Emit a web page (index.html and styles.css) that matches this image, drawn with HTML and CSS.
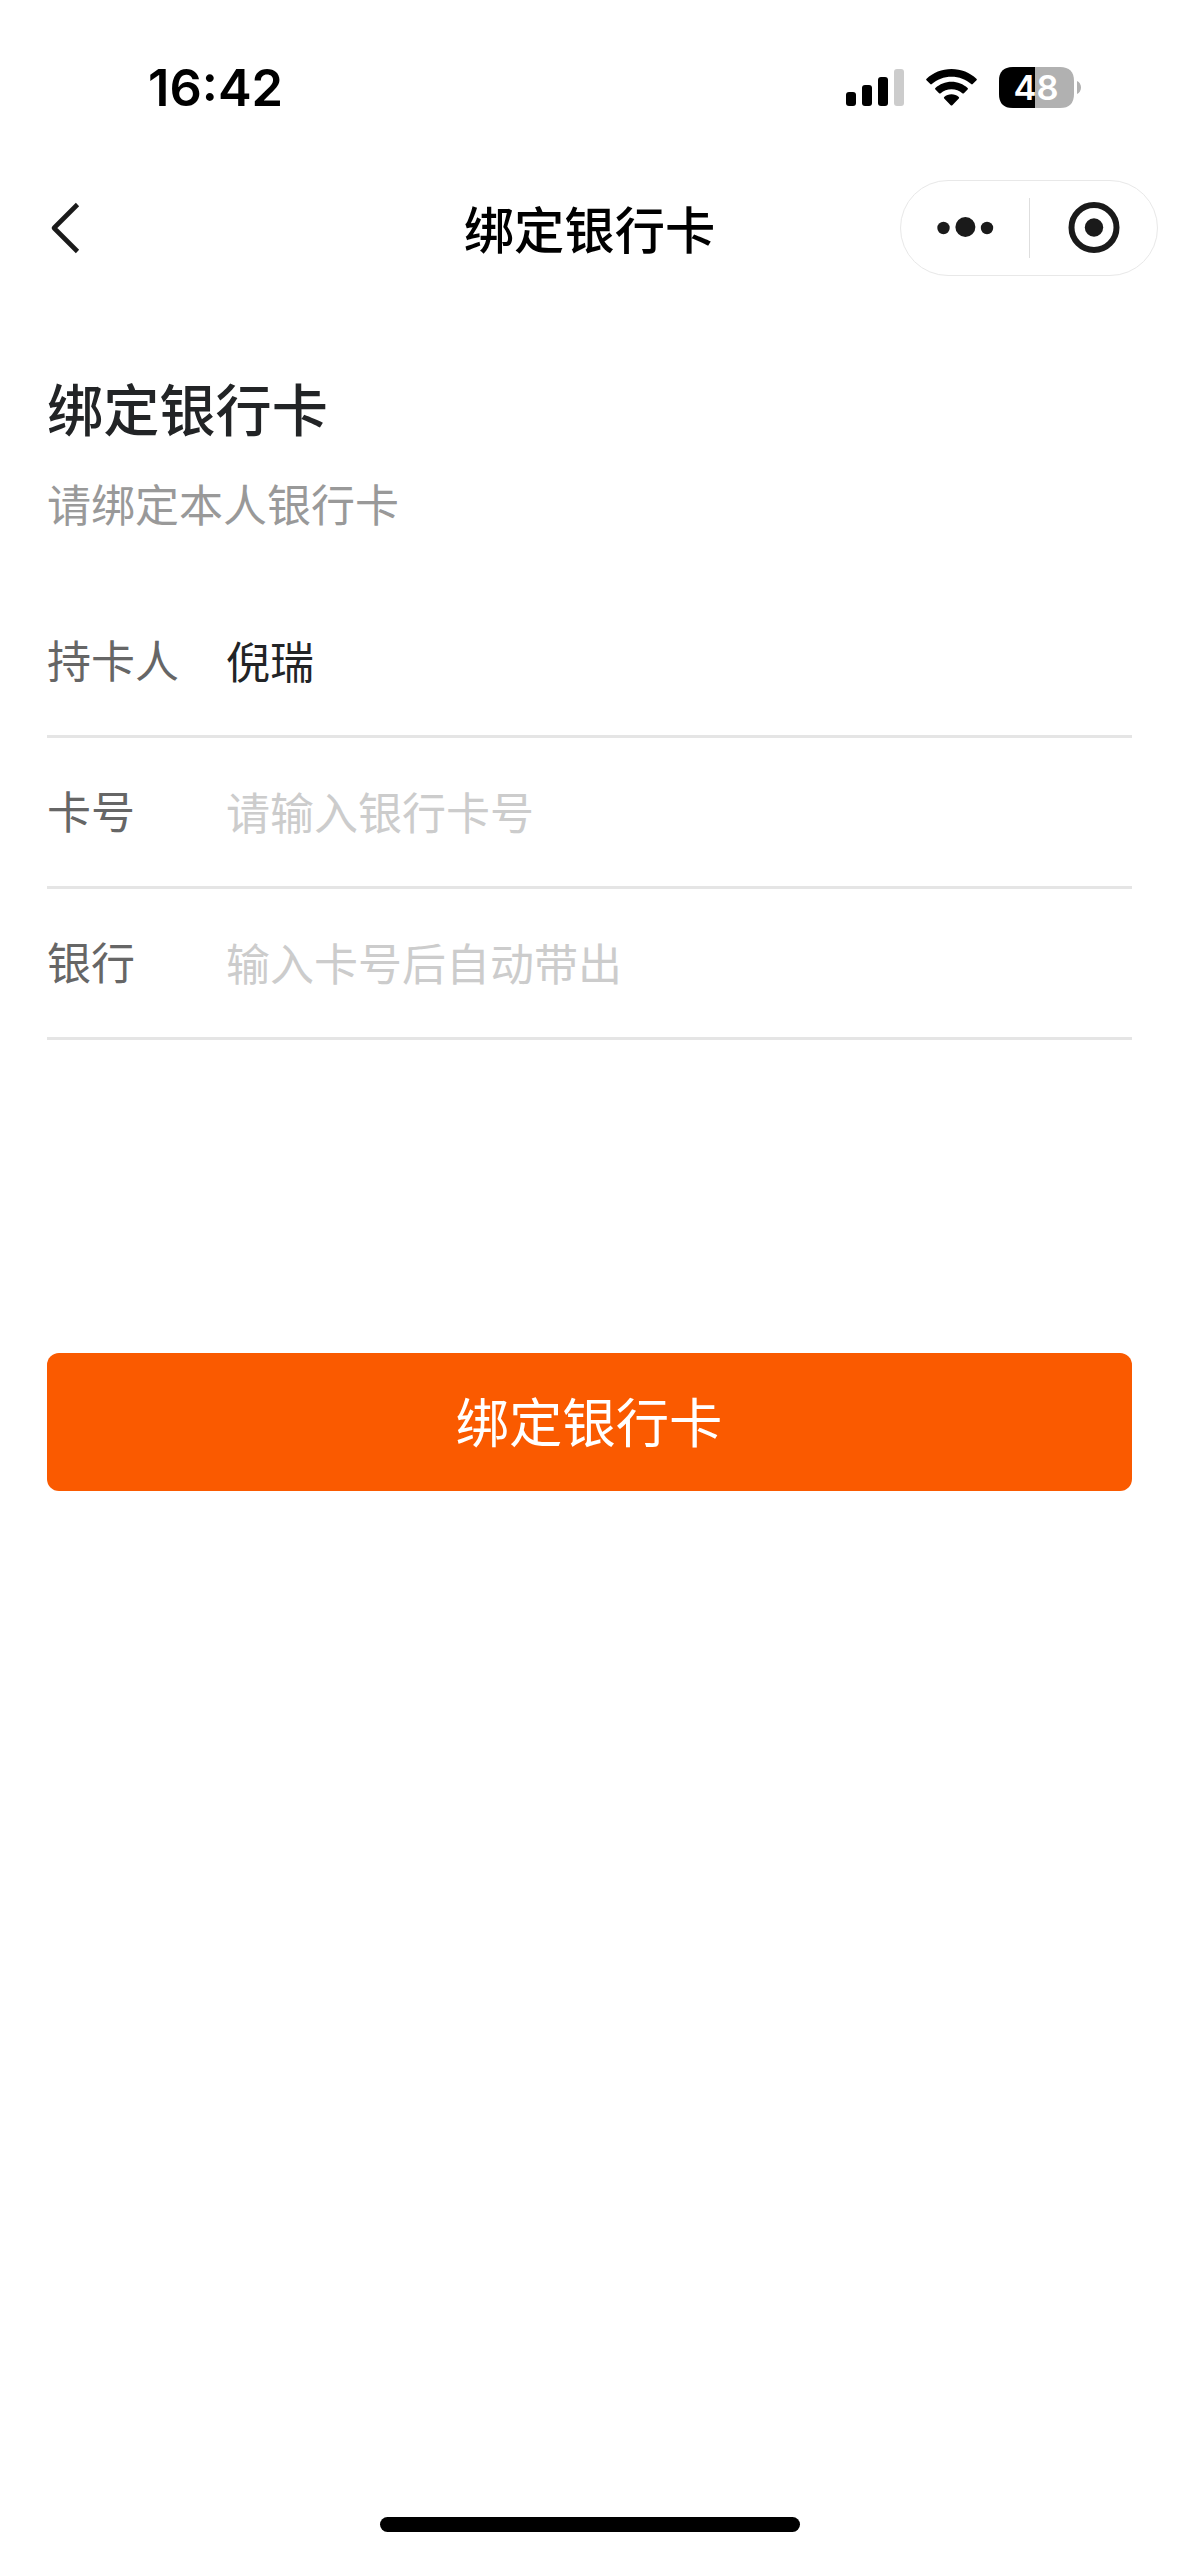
FILE: index.html
```html
<!DOCTYPE html>
<html lang="zh-CN">
<head>
<meta charset="utf-8">
<title>绑定银行卡</title>
<link rel="stylesheet" href="styles.css">
</head>
<body>
<div class="screen">
  <div class="status-bar">
    <span class="time">16:42</span>
    <div class="indicators">
      <svg class="signal" width="58" height="38" viewBox="0 0 58 38">
        <rect x="0" y="23" width="10" height="14" rx="3"/>
        <rect x="16" y="16" width="10" height="21" rx="3"/>
        <rect x="32" y="8" width="10" height="29" rx="3"/>
        <rect x="48" y="0" width="10" height="37" rx="3" fill="#cccccc"/>
      </svg>
      <svg class="wifi" width="51" height="38" viewBox="0 0 51 38">
        <path d="M25.5 0C35.200 0 44 3.700 50.400 9.700Q51.300 10.500 50.500 11.300L46.700 15.100Q46 15.800 45.200 15.100C40 10.400 33 7.800 25.500 7.800S11 10.400 5.800 15.100Q5 15.800 4.300 15.100L.5 11.300Q-.3 10.500 .6 9.700C7 3.700 15.800 0 25.500 0Z"/>
        <path d="M25.500 12.700C31.700 12.700 37.300 15.100 41.600 18.900Q42.400 19.700 41.600 20.500L37.900 24.200Q37.100 24.900 36.300 24.200C33.400 21.700 29.700 20.200 25.500 20.200S17.600 21.700 14.700 24.200Q13.900 24.900 13.100 24.200L9.400 20.500Q8.600 19.700 9.400 18.900C13.700 15.100 19.300 12.700 25.500 12.700Z"/>
        <path d="M25.500 25.300C28.300 25.300 30.800 26.300 32.800 28.100Q33.500 28.800 32.800 29.500L26.300 36.200Q25.500 37 24.700 36.200L18.200 29.500Q17.500 28.800 18.200 28.100C20.200 26.300 22.700 25.300 25.500 25.300Z"/>
      </svg>
      <svg class="battery" width="83" height="41" viewBox="0 0 83 41">
        <path d="M14 0H61Q75 0 75 14V27Q75 41 61 41H14Q0 41 0 27V14Q0 0 14 0Z" fill="#b1b1b1"/>
        <path d="M36 0H14Q0 0 0 14V27Q0 41 14 41H36Z"/>
        <path d="M78 14C80.500 15 82 17.600 82 20.500S80.500 26 78 27Z" fill="#b1b1b1"/>
        <text class="battery-level" x="37" y="33" text-anchor="middle">48</text>
      </svg>
    </div>
  </div>

  <div class="nav-bar">
    <svg class="back" width="32" height="54" viewBox="0 0 32 54">
      <path d="M27.500 3.500L4 27L27.500 50.500" fill="none" stroke="#1a1a1a" stroke-width="4.600" stroke-linejoin="round"/>
    </svg>
    <div class="nav-title">绑定银行卡</div>
    <div class="capsule">
      <svg class="capsule-icons" width="256" height="94" viewBox="0 0 256 94">
        <g fill="#1a1a1a">
          <circle cx="42.500" cy="47" r="6.200"/>
          <circle cx="64.400" cy="46" r="10"/>
          <circle cx="86" cy="47" r="6.200"/>
          <circle cx="193" cy="46.500" r="9.200"/>
        </g>
        <circle cx="193" cy="46.500" r="22.500" fill="none" stroke="#1a1a1a" stroke-width="6"/>
        <path d="M128.500 17V77" stroke="#dedede"/>
      </svg>
    </div>
  </div>

  <main class="content">
    <h1 class="heading">绑定银行卡</h1>
    <p class="hint">请绑定本人银行卡</p>
    <div class="form">
      <div class="row"><span class="label">持卡人</span><span class="value">倪瑞</span></div>
      <div class="row"><span class="label">卡号</span><span class="value placeholder">请输入银行卡号</span></div>
      <div class="row"><span class="label">银行</span><span class="value placeholder">输入卡号后自动带出</span></div>
    </div>
    <button class="submit">绑定银行卡</button>
  </main>

  <div class="home-indicator"></div>
</div>
</body>
</html>
```

FILE: styles.css
```css
* {
  box-sizing: border-box;
}

body {
  margin: 0;
  background: #fff;
  font-family: "Noto Sans CJK SC", sans-serif;
}

.screen {
  display: flex;
  flex-direction: column;
  align-items: stretch;
  width: 1179px;
  height: 2556px;
  overflow: hidden;
}

.status-bar {
  display: flex;
  justify-content: space-between;
  align-items: center;
  height: 175px;
  padding: 0 97px 0 148px;
}

.time {
  font: 600 50.6px/60px Inter, sans-serif;
  color: #000;
}

.indicators {
  display: flex;
  align-items: center;
  gap: 22px;
}

.battery-level {
  font: 600 34.5px Inter, sans-serif;
  fill: #fff;
}

.nav-bar {
  display: grid;
  grid-template-columns: 1fr auto 1fr;
  align-items: center;
  height: 106px;
  padding: 0 21px;
}

.back {
  margin-left: 29px;
}

.nav-title {
  padding-bottom: 3px;
  font-size: 50.3px;
  font-weight: 500;
  line-height: 60px;
  color: #000;
}

.capsule {
  justify-self: end;
  width: 258px;
  height: 96px;
  border: 1px solid #e8e8e8;
  border-radius: 48px;
}

.capsule-icons {
  display: block;
}

.content {
  display: flex;
  flex-direction: column;
  padding: 86px 47px 0;
}

.heading {
  margin: 0;
  font-size: 56.2px;
  font-weight: 500;
  line-height: 80px;
  color: #222426;
}

.hint {
  margin: 26px 0 54px;
  font-size: 44px;
  line-height: 60px;
  color: #999;
}

.row {
  display: flex;
  align-items: center;
  height: 151px;
  padding-bottom: 5px;
  border-bottom: 3px solid #e5e5e5;
  font-size: 44px;
  line-height: 60px;
}

.label {
  width: 179px;
  color: #666;
}

.value {
  padding-top: 3px;
  color: #222426;
}

.placeholder {
  color: #ccc;
}

.submit {
  height: 138px;
  margin-top: 313px;
  padding: 0 1px 5px 0;
  border: 0;
  border-radius: 12px;
  background: #fa5a00;
  color: #fff;
  font-family: inherit;
  font-size: 53.4px;
  line-height: 80px;
}

.home-indicator {
  width: 420px;
  height: 15px;
  margin: auto auto 24px;
  border-radius: 8px;
  background: #000;
}
```
